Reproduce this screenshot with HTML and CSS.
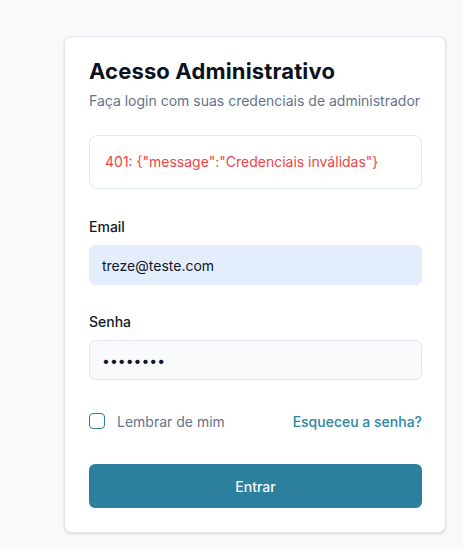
FILE: index.html
```html
<!DOCTYPE html>
<html lang="pt-BR">
<head>
<meta charset="utf-8">
<title>Acesso Administrativo</title>
<link rel="stylesheet" href="styles.css">
</head>
<body>
<main class="page">
  <section class="card">
    <h1 class="title">Acesso Administrativo</h1>
    <p class="subtitle">Faça login com suas credenciais de administrador</p>

    <div class="alert">401: {"message":"Credenciais inválidas"}</div>

    <form class="form">
      <div class="field">
        <label class="label" for="email">Email</label>
        <input class="input input-filled" id="email" type="email" value="treze@teste.com">
      </div>
      <div class="field">
        <label class="label" for="senha">Senha</label>
        <input class="input" id="senha" type="password" value="12345678">
      </div>
      <div class="row">
        <label class="remember"><span class="checkbox"></span>Lembrar de mim</label>
        <a class="link" href="#">Esqueceu a senha?</a>
      </div>
      <button class="button" type="button">Entrar</button>
    </form>
  </section>
</main>
</body>
</html>
```

FILE: styles.css
```css
* { box-sizing: border-box; }
html, body { margin: 0; padding: 0; }
body {
  background: #f8f9fb;
  font-family: Inter, "Noto Sans", sans-serif;
  color: #0f172a;
  width: 463px;
  height: 549px;
  overflow: hidden;
}
.page {
  padding: 36px 0 0 64px;
}
.card {
  width: 382px;
  background: #fff;
  border: 1px solid #e5e7eb;
  border-radius: 8px;
  box-shadow: 0 1px 3px rgba(15, 23, 42, 0.10), 0 1px 2px rgba(15, 23, 42, 0.06);
  padding: 20px 23px 24px 24px;
}
.title {
  margin: 0;
  font-size: 22px;
  line-height: 28px;
  font-weight: 700;
  letter-spacing: 0.15px;
  color: #0b1220;
}
.subtitle {
  margin: 6px 0 0;
  font-size: 14px;
  line-height: 20px;
  color: #64748b;
}
.alert {
  margin-top: 24px;
  border: 1px solid #e2e8f0;
  border-radius: 8px;
  padding: 16px 15px;
  font-size: 14px;
  line-height: 20px;
  color: #ef4444;
}
.form {
  display: flex;
  flex-direction: column;
  margin-top: 28px;
}
.field {
  display: flex;
  flex-direction: column;
  gap: 8px;
  margin-bottom: 27px;
}
.label {
  font-size: 14px;
  line-height: 20px;
  font-weight: 500;
  color: #111827;
}
.input {
  height: 40px;
  width: 100%;
  border: 1px solid #e2e8f0;
  border-radius: 6px;
  background: #f8fafc;
  padding: 0 12px;
  font-family: Inter, "Noto Sans", sans-serif;
  font-size: 14px;
  color: #0f172a;
  outline: none;
}
.input-filled {
  background: #e4edfb;
  border-color: #e4edfb;
}
.row {
  display: flex;
  justify-content: space-between;
  align-items: center;
  height: 20px;
  margin-top: 4px;
}
.remember {
  display: flex;
  align-items: center;
  gap: 12px;
  font-size: 14px;
  color: #64748b;
}
.checkbox {
  width: 16px;
  height: 16px;
  border: 1.5px solid #2b7e99;
  border-radius: 4px;
  background: #fff;
}
.link {
  font-size: 14px;
  font-weight: 500;
  color: #2b87a1;
  text-decoration: none;
}
.button {
  margin-top: 33px;
  height: 44px;
  width: 100%;
  border: none;
  border-radius: 6px;
  background: #2c809d;
  color: #f5fafc;
  font-family: Inter, "Noto Sans", sans-serif;
  font-size: 14px;
  font-weight: 500;
}
```
